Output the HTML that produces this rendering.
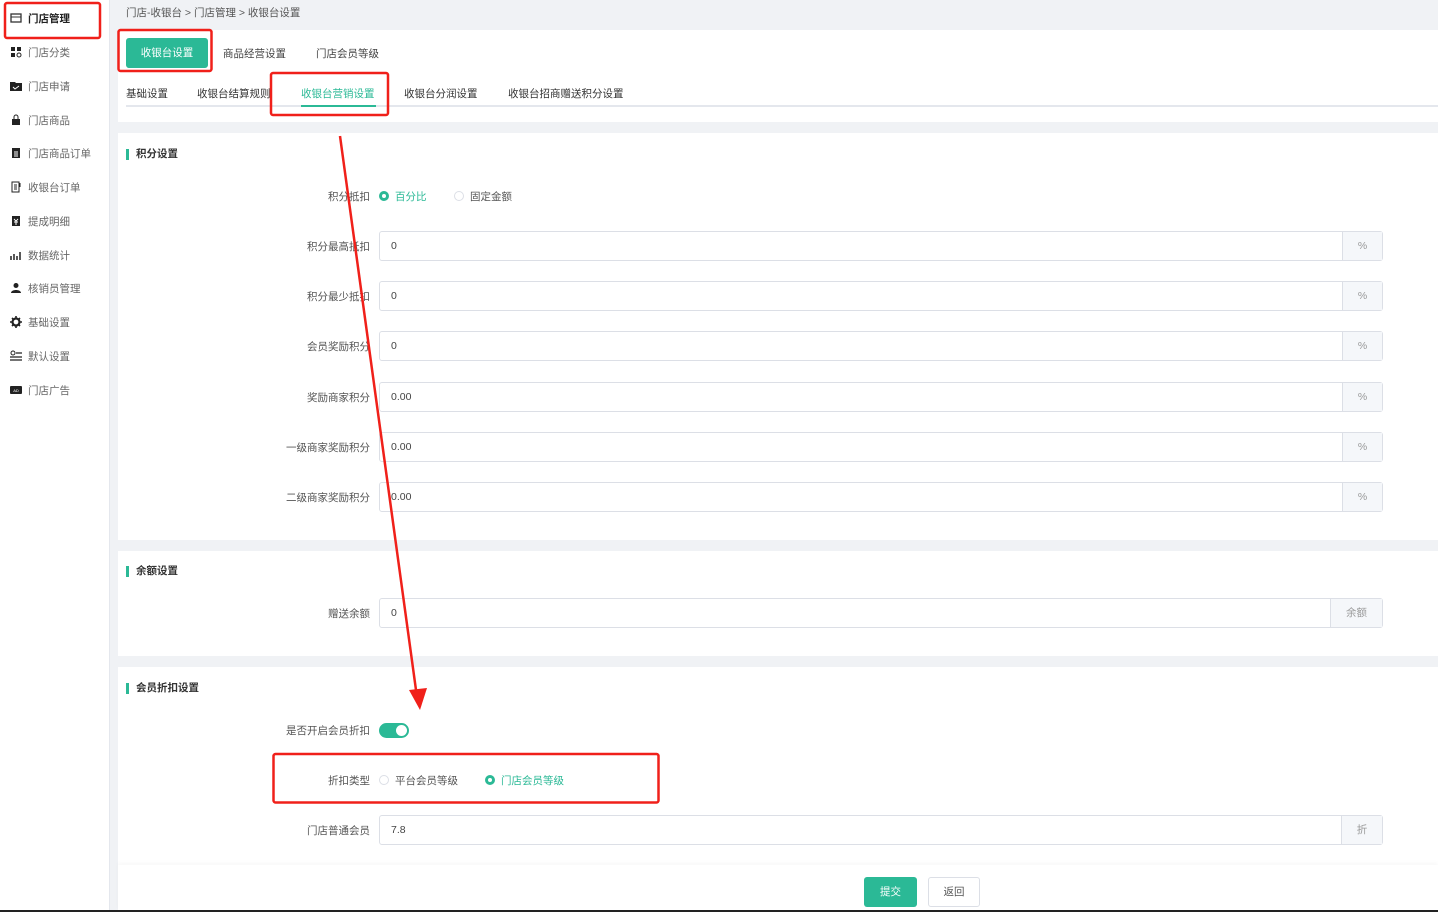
<!DOCTYPE html>
<html><head><meta charset="utf-8">
<style>
*{box-sizing:border-box;margin:0;padding:0}
body{width:1438px;height:912px;overflow:hidden;background:#f0f2f5;font-family:"Liberation Sans","Noto Sans CJK SC",sans-serif;font-size:10.5px;color:#333;position:relative}
.abs{position:absolute}
.side{left:0;top:0;width:110px;height:912px;background:#fff;border-right:1px solid #e4e7ed}
.mi{position:absolute;left:10px;height:16px;display:flex;align-items:center;color:#666;font-size:10.5px}
.mi svg{width:12px;height:12px;margin-right:6px}
.panel{position:absolute;left:118px;right:0;background:#fff}
.lbl{position:absolute;width:252px;text-align:right;left:118px;color:#555}
.inp{position:absolute;left:379px;width:1004px;height:30px;border:1px solid #dcdfe6;border-radius:3px;background:#fff;padding-left:11px;line-height:28px;color:#444}
.add{position:absolute;right:0;top:0;height:28px;background:#f5f7fa;border-left:1px solid #dcdfe6;color:#999;text-align:center;line-height:28px}
.sec{position:absolute;left:126px;font-weight:bold;color:#333;padding-left:7px;border-left:3px solid #2bb996;line-height:11px}
.rad{display:inline-block;width:10px;height:10px;border-radius:50%;border:1px solid #dcdfe6;vertical-align:-1px;margin-right:6px}
.rad.on{border:3px solid #2bb996;background:#fff}
</style></head><body>
<div class="abs side"></div>
<div class="mi" style="top:10px;color:#222;font-weight:bold"><svg viewBox="0 0 12 12"><rect x="1" y="2" width="10" height="8" fill="none" stroke="#333" stroke-width="1.3"/><line x1="1" y1="5" x2="11" y2="5" stroke="#333"/></svg>门店管理</div>
<div class="mi" style="top:44px"><svg viewBox="0 0 12 12"><rect x="1" y="1" width="4" height="4" fill="#222"/><rect x="7" y="1" width="4" height="4" fill="#222"/><rect x="1" y="7" width="4" height="4" fill="#222"/><circle cx="9" cy="9" r="2" fill="none" stroke="#222"/></svg>门店分类</div>
<div class="mi" style="top:78px"><svg viewBox="0 0 12 12"><path d="M0 2h5l1 1h6v8H0z" fill="#222"/><path d="M3 7l2 2 4-3" stroke="#fff" fill="none"/></svg>门店申请</div>
<div class="mi" style="top:112px"><svg viewBox="0 0 12 12"><path d="M2 5h8v6H2z" fill="#222"/><path d="M4 5V3a2 2 0 0 1 4 0v2" stroke="#222" fill="none"/></svg>门店商品</div>
<div class="mi" style="top:145px"><svg viewBox="0 0 12 12"><rect x="2" y="1" width="8" height="10" fill="#222"/><path d="M4 5h4M4 7h4M4 9h4" stroke="#fff"/></svg>门店商品订单</div>
<div class="mi" style="top:179px"><svg viewBox="0 0 12 12"><rect x="2" y="1" width="7" height="10" fill="none" stroke="#222"/><path d="M4 4h3M4 6h3M4 8h3M10 2v4" stroke="#222"/></svg>收银台订单</div>
<div class="mi" style="top:213px"><svg viewBox="0 0 12 12"><rect x="2" y="1" width="8" height="10" fill="#222"/><path d="M4 4l2 2 2-2M6 6v4M4 7h4" stroke="#fff"/></svg>提成明细</div>
<div class="mi" style="top:247px"><svg viewBox="0 0 12 12"><path d="M1 11V7M4 11V5M7 11V7M10 11V3" stroke="#222" stroke-width="1.5"/></svg>数据统计</div>
<div class="mi" style="top:280px"><svg viewBox="0 0 12 12"><circle cx="6" cy="3.5" r="2.5" fill="#222"/><path d="M1 11c0-4 10-4 10 0z" fill="#222"/></svg>核销员管理</div>
<div class="mi" style="top:314px"><svg viewBox="0 0 12 12"><circle cx="6" cy="6" r="3.5" fill="none" stroke="#222" stroke-width="2.2"/><path d="M6 0v2M6 10v2M0 6h2M10 6h2M2 2l1.4 1.4M8.6 8.6L10 10M2 10l1.4-1.4M8.6 3.4L10 2" stroke="#222" stroke-width="1.6"/></svg>基础设置</div>
<div class="mi" style="top:348px"><svg viewBox="0 0 12 12"><circle cx="3" cy="3" r="2" fill="none" stroke="#222"/><path d="M6 3h6M0 7h12M0 10h12" stroke="#222" stroke-width="1.3"/></svg>默认设置</div>
<div class="mi" style="top:382px"><svg viewBox="0 0 12 12"><rect x="0" y="2" width="12" height="8" rx="1" fill="#222"/><text x="6" y="8" font-size="4" fill="#fff" text-anchor="middle" font-family="Liberation Sans">AD</text></svg>门店广告</div>

<div class="abs" style="left:126px;top:5px;color:#555">门店-收银台 &gt; 门店管理 &gt; 收银台设置</div>

<div class="panel" style="top:30px;height:92px">
 <div class="abs" style="left:8px;top:8px;width:82px;height:30px;background:#2bb996;border-radius:3px;color:#fff;text-align:center;line-height:30px">收银台设置</div>
 <div class="abs" style="left:105px;top:16px;color:#444">商品经营设置</div>
 <div class="abs" style="left:198px;top:16px;color:#444">门店会员等级</div>
 <div class="abs" style="left:8px;top:56px;color:#333">基础设置</div>
 <div class="abs" style="left:79px;top:56px;color:#333">收银台结算规则</div>
 <div class="abs" style="left:183px;top:56px;color:#2bb996">收银台营销设置</div>
 <div class="abs" style="left:286px;top:56px;color:#333">收银台分润设置</div>
 <div class="abs" style="left:390px;top:56px;color:#333">收银台招商赠送积分设置</div>
 <div class="abs" style="left:8px;right:0;top:75px;height:2px;background:#e4e7ed"></div>
 <div class="abs" style="left:183px;width:75px;top:75px;height:2px;background:#2bb996"></div>
</div>

<div class="panel" style="top:133px;height:407px"></div>
<div class="sec" style="top:149px">积分设置</div>
<div class="lbl" style="top:189px">积分抵扣</div>
<div class="abs" style="left:379px;top:189px;color:#2bb996"><span class="rad on"></span>百分比</div>
<div class="abs" style="left:454px;top:189px;color:#555"><span class="rad"></span>固定金额</div>
<div class="lbl" style="top:239px">积分最高抵扣</div><div class="inp" style="top:231px">0<div class="add" style="width:40px">%</div></div>
<div class="lbl" style="top:289px">积分最少抵扣</div><div class="inp" style="top:281px">0<div class="add" style="width:40px">%</div></div>
<div class="lbl" style="top:339px">会员奖励积分</div><div class="inp" style="top:331px">0<div class="add" style="width:40px">%</div></div>
<div class="lbl" style="top:390px">奖励商家积分</div><div class="inp" style="top:382px">0.00<div class="add" style="width:40px">%</div></div>
<div class="lbl" style="top:440px">一级商家奖励积分</div><div class="inp" style="top:432px">0.00<div class="add" style="width:40px">%</div></div>
<div class="lbl" style="top:490px">二级商家奖励积分</div><div class="inp" style="top:482px">0.00<div class="add" style="width:40px">%</div></div>

<div class="panel" style="top:551px;height:105px"></div>
<div class="sec" style="top:566px">余额设置</div>
<div class="lbl" style="top:606px">赠送余额</div><div class="inp" style="top:598px">0<div class="add" style="width:52px">余额</div></div>

<div class="panel" style="top:667px;height:198px"></div>
<div class="sec" style="top:683px">会员折扣设置</div>
<div class="lbl" style="top:723px">是否开启会员折扣</div>
<div class="abs" style="left:379px;top:723px;width:30px;height:15px;border-radius:8px;background:#2bb996"><div class="abs" style="right:2px;top:2px;width:11px;height:11px;border-radius:50%;background:#fff"></div></div>
<div class="lbl" style="top:773px">折扣类型</div>
<div class="abs" style="left:379px;top:773px;color:#555"><span class="rad"></span>平台会员等级</div>
<div class="abs" style="left:485px;top:773px;color:#2bb996"><span class="rad on"></span>门店会员等级</div>
<div class="lbl" style="top:823px">门店普通会员</div><div class="inp" style="top:815px">7.8<div class="add" style="width:41px">折</div></div>

<div class="panel" style="top:865px;height:45px;box-shadow:0 -2px 4px rgba(0,0,0,0.03)"></div>
<div class="abs" style="left:864px;top:877px;width:53px;height:30px;background:#2bb996;border-radius:3px;color:#fff;text-align:center;line-height:30px">提交</div>
<div class="abs" style="left:928px;top:877px;width:52px;height:30px;border:1px solid #dcdfe6;border-radius:3px;background:#fff;color:#555;text-align:center;line-height:28px">返回</div>
<div class="abs" style="left:0;top:910px;width:1438px;height:2px;background:#222"></div>

<svg class="abs" style="left:0;top:0" width="1438" height="912">
 <g fill="none" stroke="#f0201a" stroke-width="2.5">
  <rect x="5" y="3" width="95" height="35" rx="2"/>
  <rect x="118.5" y="30" width="93" height="41" rx="2"/>
  <rect x="271" y="73" width="117" height="42" rx="2"/>
  <rect x="273.5" y="754" width="385" height="48.5" rx="2"/>
 </g>
 <line x1="340" y1="136" x2="416" y2="690" stroke="#f0201a" stroke-width="2.5"/>
 <polygon points="409,690 427,688 420,710" fill="#f0201a"/>
</svg>
</body></html>
